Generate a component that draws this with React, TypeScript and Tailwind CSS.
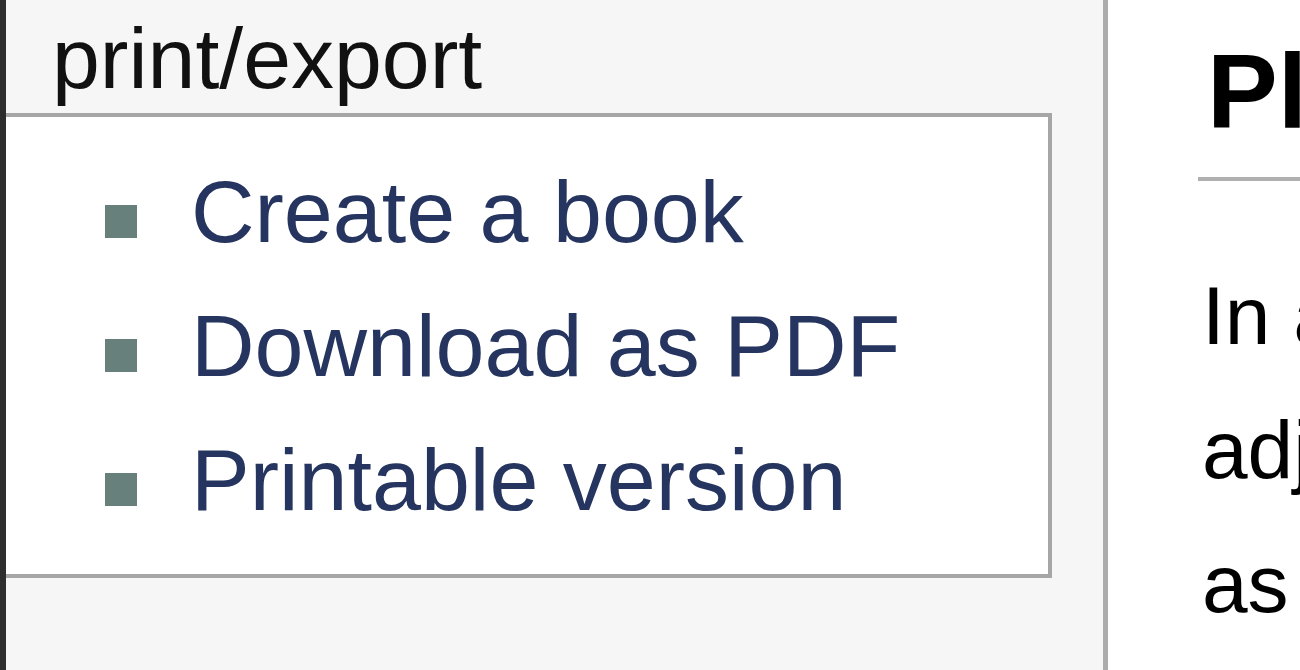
const links = ["Create a book", "Download as PDF", "Printable version"];

const bodyLines = ["In an earlier revision of this article, the", "adjacent sections were grouped together", "as one long list of entries."];

export default function App() {
  return (
    <div className="flex h-[670px] w-[1300px] overflow-hidden bg-white font-['Liberation_Sans',Arial,sans-serif]">
      {/* left edge */}
      <div className="w-[6px] shrink-0 bg-[#2e2e2e]" />

      {/* sidebar */}
      <div className="w-[1097px] shrink-0 bg-[#f6f6f6]">
        <h3 className="pl-[46px] pt-[15px] text-[86px] leading-none font-normal text-[#111]">print/export</h3>
        <div className="mt-[12px] mr-[51px] border-y-4 border-r-4 border-[#a6a6a6] bg-white pt-[28px] pb-[27px]">
          <ul>
            {links.map((label) => (
              <li key={label} className="flex h-[134px] items-start">
                <span className="mt-[60px] ml-[99px] h-[33px] w-[32px] shrink-0 bg-[#67807b]" />
                <a className="ml-[54px] whitespace-nowrap text-[88px] leading-[134px] text-[#25355f]">{label}</a>
              </li>
            ))}
          </ul>
        </div>
      </div>

      {/* divider */}
      <div className="w-[5px] shrink-0 bg-[#acacac]" />

      {/* content */}
      <div className="min-w-0 flex-1 overflow-hidden pl-[90px]">
        <h1 className="mt-[38px] border-b-4 border-[#b0b0b0] pb-[33px] pl-[9px] whitespace-nowrap text-[106px] leading-none font-bold text-black">
          Planning
        </h1>
        <div className="mt-[68px] pl-[4px]">
          {bodyLines.map((line) => (
            <p key={line} className="whitespace-nowrap text-[82px] leading-[134px] text-black">
              {line}
            </p>
          ))}
        </div>
      </div>
    </div>
  );
}
